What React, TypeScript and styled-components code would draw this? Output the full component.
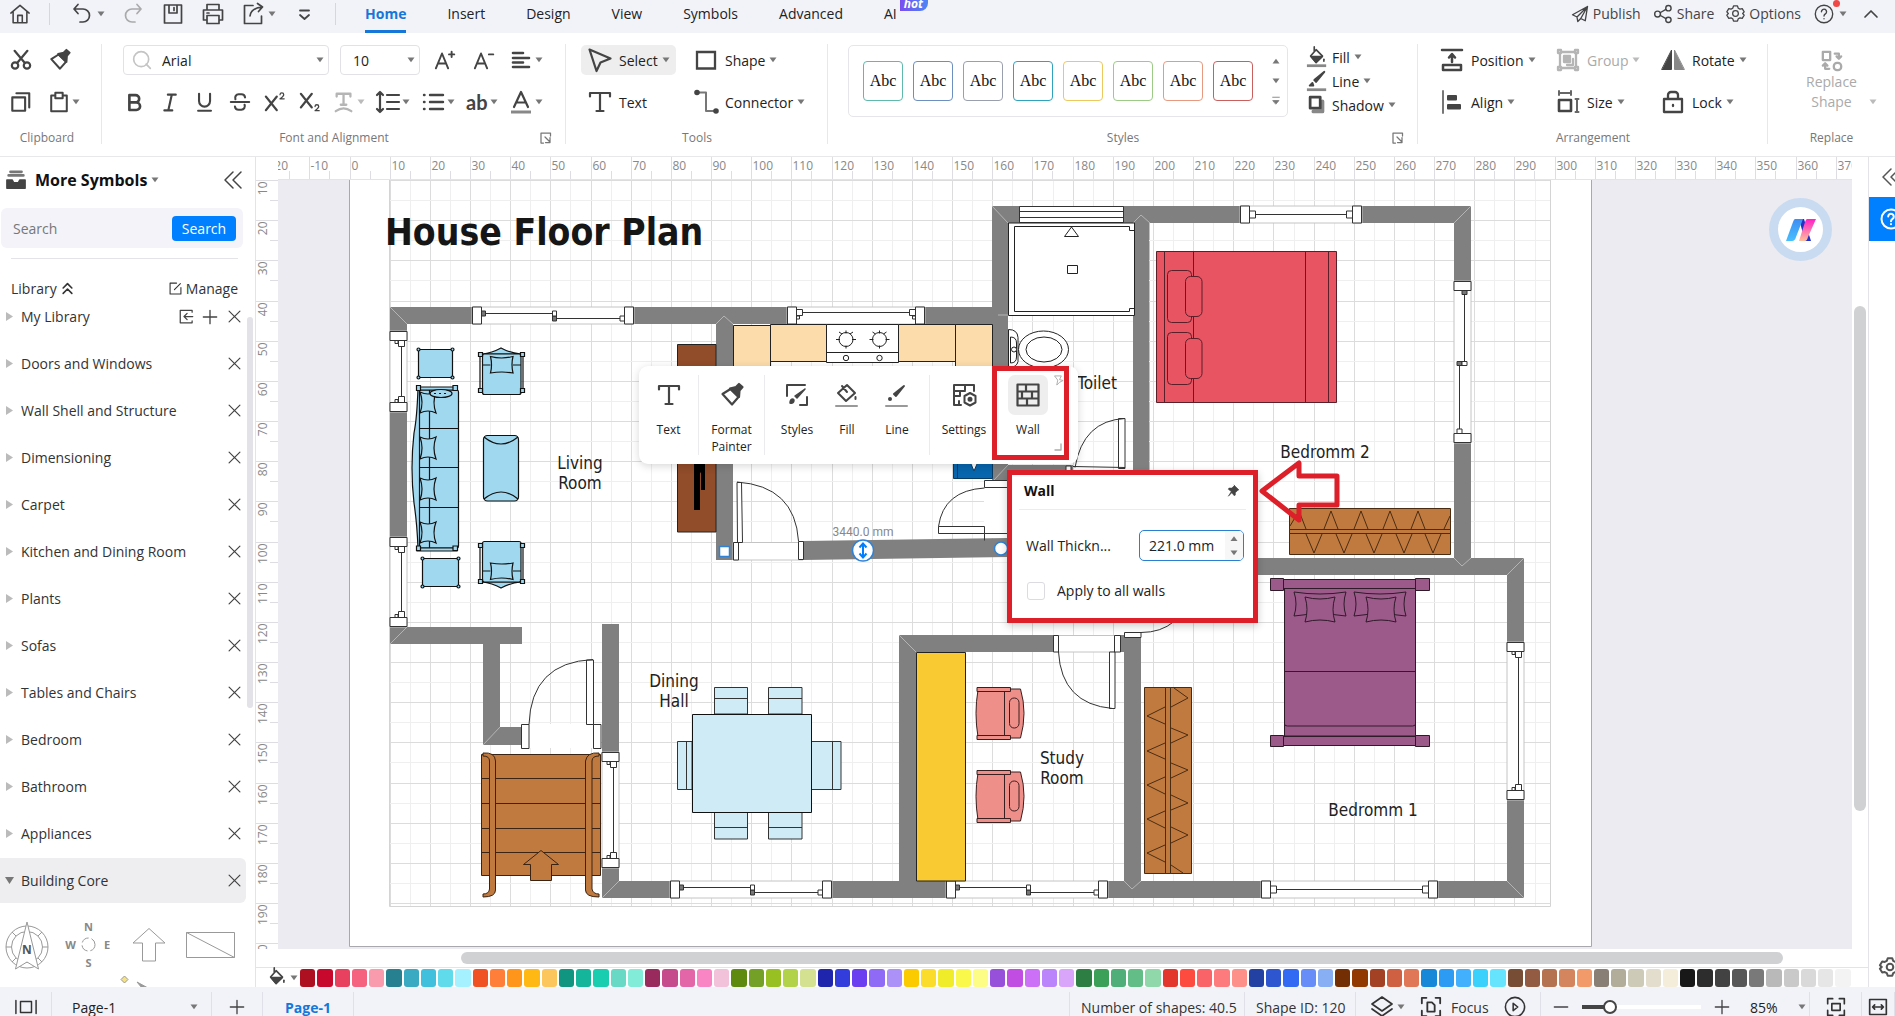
import React from "react";
import styled, { createGlobalStyle, css } from "styled-components";

const UI_FONT = `"Open Sans", "Noto Sans", sans-serif`;
const PLAN_FONT = `"DejaVu Sans Condensed", "Noto Sans", sans-serif`;
const BLUE = "#0080ff";

const GlobalStyle = createGlobalStyle`
  *, *::before, *::after { box-sizing: border-box; }
  html, body { margin: 0; height: 100%; overflow: hidden; }
  body { font-family: ${UI_FONT}; font-size: 14px; color: #222; background: #fff; }
  button, input, select { font: inherit; color: inherit; }
`;

/* ---------- shared pieces ---------- */

const Button = styled.button`
  display: flex;
  align-items: center;
  justify-content: center;
  padding: 0;
  border: 0;
  background: none;
  white-space: nowrap;
  cursor: pointer;
`;

const Svg = styled.svg<{ $size?: number }>`
  display: block;
  flex: none;
  width: ${(p) => p.$size ?? 24}px;
  height: ${(p) => p.$size ?? 24}px;
  fill: none;
  stroke: currentColor;
  stroke-width: 2;
  stroke-linecap: round;
  stroke-linejoin: round;
  overflow: visible;
`;

const CaretSvg = styled.svg<{ $light?: boolean }>`
  display: block;
  flex: none;
  width: 8px;
  height: 6px;
  fill: ${(p) => (p.$light ? "#bbb" : "#777")};
`;

const Caret = ({ light }: { light?: boolean }) => (
  <CaretSvg viewBox="0 0 8 6" $light={light}>
    <path d="M.5 .5h7L4 5.200z" />
  </CaretSvg>
);

type IconProps = { size?: number; width?: number; children: React.ReactNode };
const Icon = ({ size = 24, width = 2, children }: IconProps) => (
  <Svg viewBox="0 0 24 24" $size={size} aria-hidden="true">
    <g strokeWidth={width}>{children}</g>
  </Svg>
);

const HelpIcon = ({ size, width }: { size?: number; width?: number }) => (
  <Icon size={size} width={width}>
    <circle cx="12" cy="12" r="9.5" />
    <path d="M9.2 9.6a2.8 2.8 0 1 1 4.3 2.3c-1 .7-1.5 1.2-1.5 2.3" />
    <path d="M12 17v.3" />
  </Icon>
);

const GearIcon = ({ size, width = 1.6 }: { size?: number; width?: number }) => (
  <Icon size={size} width={width}>
    <path d="M9.5 2.5h5l1 2.8 2.2 1.2 2.8-.6L23 10l-2 2 2 2-2.500 4.100-2.800-.6-2.200 1.200-1 2.800h-5l-1-2.800-2.200-1.200-2.800.6L1 14l2-2-2-2 2.500-4.100 2.800.6 2.200-1.200z" />
    <circle cx="12" cy="12" r="3.600" />
  </Icon>
);

const DoubleLeft = () => (
  <Icon size={24} width={1.500}>
    <path d="M12 4l-8 8 8 8M20 4l-8 8 8 8" />
  </Icon>
);

/* ---------- application frame ---------- */

const Shell = styled.div`
  display: flex;
  flex-direction: column;
  height: 100vh;
  overflow: hidden;
  background: #fff;
`;

/* ---------- title bar ---------- */

const TitleBar = styled.header`
  display: flex;
  align-items: center;
  flex: none;
  height: 33px;
  padding: 0 12px 6px 9px;
  background: #f2f3f9;
  color: #333;
`;

const QuickAccess = styled.div<{ $gap: number; $pad: string }>`
  display: flex;
  align-items: center;
  gap: ${(p) => p.$gap}px;
  padding: ${(p) => p.$pad};
  height: 22px;
  border-right: 1px solid #d6d7de;
`;

const QuickButton = styled(Button)<{ $muted?: boolean }>`
  gap: 3px;
  color: ${(p) => (p.$muted ? "#aaa" : "#444")};
`;

const Tabs = styled.nav`
  display: flex;
  gap: 41px;
  padding-left: 29px;
`;

const Tab = styled.a<{ $active?: boolean }>`
  position: relative;
  color: #222;
  text-decoration: none;
  line-height: 26px;
  ${(p) =>
    p.$active &&
    css`
      color: #1677d8;
      font-weight: 700;
      &::after {
        content: "";
        position: absolute;
        left: 0;
        right: 0;
        bottom: -6px;
        height: 3px;
        background: #1677d8;
      }
    `}
`;

const HotBadge = styled.span`
  position: absolute;
  left: 100%;
  top: -4px;
  margin-left: 3px;
  padding: 0 5px 0 4px;
  border-radius: 0 0 8px 0;
  background: linear-gradient(90deg, #7a4df0, #4b86f5);
  color: #fff;
  font-size: 12px;
  font-style: italic;
  font-weight: 700;
  line-height: 14px;
`;

const TitleActions = styled.div`
  display: flex;
  align-items: center;
  gap: 12px;
  margin-left: auto;
`;

const TitleAction = styled(Button)`
  position: relative;
  gap: 4px;
  color: #444;
`;

const Dot = styled.i`
  position: absolute;
  left: 20px;
  top: -3px;
  width: 7px;
  height: 7px;
  border-radius: 50%;
  background: #f04747;
`;

/* ---------- ribbon ---------- */

const Ribbon = styled.div`
  display: flex;
  flex: none;
  height: 124px;
  border-bottom: 1px solid #e8e8ea;
`;

const Group = styled.section<{ $width?: number; $left: number; $last?: boolean }>`
  position: relative;
  display: flex;
  flex-direction: column;
  flex: ${(p) => (p.$width ? `0 0 ${p.$width}px` : "1 1 0")};
  min-width: 0;
  padding: 12px 0 0 ${(p) => p.$left}px;
  &::after {
    content: "";
    position: absolute;
    right: 0;
    top: 11px;
    bottom: 12px;
    width: ${(p) => (p.$last ? 0 : 1)}px;
    background: #e8e8ea;
  }
`;

const GroupName = styled.footer<{ $left: number }>`
  position: relative;
  margin: 11px 0 0 -${(p) => p.$left}px;
  color: #777;
  font-size: 12px;
  line-height: 20px;
  text-align: center;
  ${Group}:first-child > & {
    padding-right: 8px;
  }
`;

const Launcher = styled(Button)`
  position: absolute;
  right: 14px;
  top: 4px;
`;

const ToolRow = styled.div<{ $gap: number }>`
  display: flex;
  align-items: center;
  gap: ${(p) => p.$gap}px;
  height: 30px;
  & + & {
    margin-top: 12px;
  }
`;

const ToolGrid = styled.div<{ $columns: string; $gap: number }>`
  display: grid;
  grid-template-columns: ${(p) => p.$columns};
  grid-auto-rows: 30px;
  gap: 12px ${(p) => p.$gap}px;
`;

const IconButton = styled(Button)<{ $wide?: boolean; $muted?: boolean }>`
  gap: 2px;
  min-width: ${(p) => (p.$wide ? 28 : 24)}px;
  color: ${(p) => (p.$muted ? "#b5b5b5" : "#444")};
`;

const ToolButton = styled(Button)<{ $active?: boolean; $flat?: boolean; $muted?: boolean }>`
  justify-content: flex-start;
  gap: ${(p) => (p.$flat ? 4 : 7)}px;
  height: ${(p) => (p.$flat ? 24 : 30)}px;
  padding: 0 ${(p) => (p.$flat ? 0 : 7)}px;
  border-radius: 5px;
  background: ${(p) => (p.$active ? "#eee" : "none")};
  color: ${(p) => (p.$muted ? "#aaa" : "#222")};
  & > svg:first-child {
    color: ${(p) => (p.$muted ? "#b5b5b5" : "#444")};
  }
`;

const Labelled = styled.span`
  display: flex;
  align-items: center;
  gap: 4px;
`;

const Combo = styled.label<{ $width: number }>`
  display: flex;
  align-items: center;
  gap: 6px;
  width: ${(p) => p.$width}px;
  height: 30px;
  padding: 0 4px 0 8px;
  border: 1px solid #e2e2e6;
  border-radius: 4px;
  color: #c4c4c4;
`;

const PlainSelect = styled.select`
  flex: 1;
  min-width: 0;
  padding: 0 4px;
  border: 0;
  outline: 0;
  appearance: none;
  background: none;
  color: #222;
`;

const StyleArea = styled.div`
  display: flex;
  gap: 18px;
  height: 72px;
`;

const StyleBox = styled.div`
  display: flex;
  align-items: center;
  gap: 10px;
  height: 72px;
  padding: 0 3px 0 14px;
  border: 1px solid #e6e6ea;
  border-radius: 5px;
`;

const StyleSwatch = styled(Button)<{ $color: string }>`
  width: 40px;
  height: 40px;
  border: 1px solid ${(p) => p.$color};
  border-radius: 4px;
  color: #111;
  font-family: "Liberation Serif", serif;
  font-size: 16px;
`;

const StyleScroll = styled.div`
  display: flex;
  flex-direction: column;
  align-items: center;
  justify-content: space-between;
  width: 16px;
  height: 60px;
  margin-left: 5px;
`;

const StyleTools = styled.div`
  display: flex;
  flex-direction: column;
  align-items: flex-start;
`;

const ReplaceButton = styled(Button)`
  position: relative;
  flex-direction: column;
  height: 72px;
  color: #aaa;
  line-height: 20px;
`;

const CornerCaret = styled.span`
  position: absolute;
  right: 18px;
  bottom: 12px;
`;

const CaseLabel = styled.span`
  font-family: "Lato", sans-serif;
  font-size: 20px;
  font-weight: 700;
  line-height: 24px;
`;

/* ---------- workspace ---------- */

const Workspace = styled.div`
  display: flex;
  flex: 1;
  min-height: 0;
`;

const Sidebar = styled.aside`
  display: flex;
  flex-direction: column;
  flex: none;
  width: 256px;
  border-right: 1px solid #e4e4e8;
  overflow: hidden;
`;

const SideHeader = styled.div`
  display: flex;
  align-items: center;
  height: 46px;
  padding: 0 10px 0 5px;
  color: #444;
`;

const SideTitle = styled(Button)`
  gap: 4px;
  margin: 0 auto 0 8px;
  color: #111;
  font-size: 16px;
  font-weight: 700;
`;

const SearchBox = styled.form`
  display: flex;
  align-items: center;
  flex: none;
  height: 40px;
  margin: 5px 12px 10px 1px;
  padding: 0 7px 0 12px;
  border-radius: 6px;
  background: #f3f3f9;
`;

const SearchInput = styled.input`
  flex: 1;
  min-width: 0;
  padding: 0;
  border: 0;
  outline: 0;
  background: none;
  &::placeholder {
    color: #777;
    opacity: 1;
  }
`;

const SearchButton = styled(Button)`
  width: 64px;
  height: 25px;
  border-radius: 4px;
  background: ${BLUE};
  color: #fff;
`;

const LibraryBar = styled.div`
  display: flex;
  align-items: flex-end;
  justify-content: space-between;
  flex: none;
  height: 40px;
  margin: 0 17px 0 11px;
  border-top: 1px solid #e4e4e8;
`;

const BarButton = styled(Button)`
  gap: 4px;
  color: #333;
`;

const LibraryArea = styled.div`
  position: relative;
  flex: 1;
  min-height: 0;
  margin-top: -5px;
  overflow: hidden;
`;

const LibraryList = styled.ul`
  margin: 0;
  padding: 1px 0 0;
  list-style: none;
`;

const LibraryItem = styled.li<{ $open?: boolean }>`
  display: flex;
  align-items: center;
  height: 45px;
  margin: 0 9px 2px 0;
  padding: 0 0 0 5px;
  border-radius: 0 6px 6px 0;
  background: ${(p) => (p.$open ? "#eeeef0" : "none")};
`;

const LibraryName = styled(Button)`
  flex: 1;
  justify-content: flex-start;
  gap: 7px;
  color: #333;
`;

const SideScroll = styled.div`
  position: absolute;
  right: 2px;
  top: 24px;
  width: 6px;
  height: 391px;
  border-radius: 3px;
  background: #e2e2e8;
`;

const Thumbs = styled.svg`
  display: block;
  width: 255px;
  height: 90px;
`;

const Editor = styled.main`
  display: flex;
  flex-direction: column;
  flex: 1;
  min-width: 0;
`;

const EditorTop = styled.div`
  display: grid;
  grid-template-columns: 22px minmax(0, 1fr) 16px;
  grid-template-rows: 23px minmax(0, 1fr) 18px;
  flex: 1;
  min-height: 0;
`;

const RulerSvg = styled.svg<{ $side?: boolean }>`
  display: block;
  width: 100%;
  height: 100%;
  overflow: hidden;
  font-family: ${UI_FONT};
  font-size: 12px;
  fill: #888;
  stroke: none;
  border-bottom: ${(p) => (p.$side ? 0 : 1)}px solid #e4e4e8;
`;

const Canvas = styled.div`
  position: relative;
  overflow: hidden;
  background: #ebebf1;
`;

const Drawing = styled.svg`
  display: block;
  width: 1573px;
  height: 770px;
  font-family: ${PLAN_FONT};
`;

const VTrack = styled.div`
  grid-row: 2;
  grid-column: 3;
  padding: 126px 2px 0;
`;

const VThumb = styled.div`
  height: 505px;
  border-radius: 6px;
  background: #d0d1d3;
`;

const HTrack = styled.div`
  grid-column: 2;
  padding: 3px 69px 3px 183px;
`;

const HThumb = styled.div`
  height: 12px;
  border-radius: 6px;
  background: #d0d1d3;
`;

const Palette = styled.div`
  display: flex;
  align-items: center;
  flex: none;
  height: 20px;
  padding: 0 17px 0 10px;
  border-top: 1px solid #e4e4e8;
  color: #444;
`;

const Swatches = styled.div`
  display: flex;
  flex: 1;
  gap: 2px;
  margin-left: 2px;
`;

const Swatch = styled.button<{ $color: string }>`
  flex: 1;
  min-width: 0;
  height: 18px;
  padding: 0;
  border: 0;
  border-radius: 3px;
  background: ${(p) => p.$color};
`;

const RightDock = styled.aside`
  display: flex;
  flex-direction: column;
  flex: none;
  width: 27px;
  border-left: 1px solid #e4e4e8;
  overflow: hidden;
`;

const DockButton = styled(Button)<{ $active?: boolean }>`
  justify-content: flex-start;
  flex: none;
  height: ${(p) => (p.$active ? 44 : 40)}px;
  padding-left: 10px;
  background: ${(p) => (p.$active ? BLUE : "none")};
  color: ${(p) => (p.$active ? "#fff" : "#555")};
  &:last-child {
    margin-top: auto;
  }
`;

/* ---------- overlays on the canvas ---------- */

const FloatBar = styled.div`
  position: absolute;
  left: 361px;
  top: 186px;
  display: flex;
  width: 439px;
  height: 98px;
  padding: 9px 0;
  border-radius: 9px;
  background: #fff;
  box-shadow: 0 2px 8px rgba(0, 0, 0, 0.16);
`;

const FloatSection = styled.div<{ $pad: number }>`
  display: flex;
  padding: 0 ${(p) => p.$pad}px;
  & + & {
    border-left: 1px solid #ebebee;
  }
`;

const FloatTool = styled(Button)<{ $width: number }>`
  flex-direction: column;
  justify-content: flex-start;
  gap: 6px;
  width: ${(p) => p.$width}px;
  font-size: 12px;
  line-height: 17px;
  white-space: normal;
`;

const FloatIcon = styled.span<{ $active?: boolean }>`
  display: grid;
  place-items: center;
  width: 40px;
  height: 40px;
  border-radius: 7px;
  background: ${(p) => (p.$active ? "#eee" : "none")};
  color: #444;
`;

const FloatExtras = styled.div`
  position: absolute;
  right: 13px;
  top: 9px;
  bottom: 13px;
  display: flex;
  flex-direction: column;
  justify-content: space-between;
  color: #aaa;
`;

const RedFrame = styled.div`
  position: absolute;
  left: 714px;
  top: 186px;
  width: 77px;
  height: 94px;
  border: 5px solid #dd1f2a;
`;

const WallPanel = styled.section`
  position: absolute;
  left: 729px;
  top: 290px;
  width: 251px;
  height: 153px;
  padding: 0 7px;
  border: 5px solid #dd1f2a;
  background: #fff;
  box-shadow: 0 3px 8px rgba(0, 0, 0, 0.2);
`;

const PanelTitle = styled.div`
  display: flex;
  align-items: center;
  justify-content: space-between;
  height: 35px;
  padding: 0 6px 3px 5px;
  border-bottom: 1px solid #ececee;
  color: #444;
  & > strong {
    color: #111;
  }
`;

const PanelRow = styled.div`
  display: flex;
  align-items: center;
  justify-content: space-between;
  padding: 20px 2px 0 7px;
`;

const Spin = styled.span`
  display: flex;
  width: 105px;
  height: 31px;
  border: 1px solid #2a7fd0;
  border-radius: 5px;
  overflow: hidden;
`;

const SpinInput = styled.input`
  flex: 1;
  min-width: 0;
  padding: 0 0 0 9px;
  border: 0;
  outline: 0;
  background: none;
`;

const SpinButtons = styled.span`
  display: flex;
  flex-direction: column;
  width: 18px;
  background: #f7f7f8;
`;

const SpinButton = styled(Button)<{ $up?: boolean }>`
  flex: 1;
  transform: ${(p) => (p.$up ? "rotate(180deg)" : "none")};
`;

const CheckRow = styled.label`
  display: flex;
  align-items: center;
  gap: 12px;
  padding: 20px 0 0 8px;
`;

const Check = styled.input`
  width: 18px;
  height: 18px;
  margin: 0;
  appearance: none;
  border: 1px solid #dcdce0;
  border-radius: 3px;
  background: #fff;
`;

const ArrowMark = styled.svg`
  position: absolute;
  left: 978px;
  top: 276px;
  width: 90px;
  height: 72px;
  fill: none;
  stroke: #dd1f2a;
  stroke-width: 5;
  stroke-linejoin: round;
`;

const Assistant = styled(Button)`
  position: absolute;
  right: 20px;
  top: 18px;
  width: 63px;
  height: 63px;
  border: 9px solid #c9dbf1;
  border-radius: 50%;
  background: #fff;
`;

/* ---------- status bar ---------- */

const StatusBar = styled.footer`
  flex: none;
  height: 29px;
  overflow: hidden;
  background: #f2f3f9;
`;

const StatusInner = styled.div`
  display: flex;
  align-items: center;
  height: 40px;
  color: #333;
`;

const StatusCell = styled.div<{ $width: number; $left?: number; $gap?: number }>`
  display: flex;
  align-items: center;
  justify-content: ${(p) => (p.$left === undefined ? "center" : "flex-start")};
  gap: ${(p) => p.$gap ?? 0}px;
  width: ${(p) => p.$width}px;
  height: 30px;
  padding-left: ${(p) => p.$left ?? 0}px;
  border-right: 1px solid #dfe0e8;
  white-space: nowrap;
`;

const PageSelect = styled.label`
  display: flex;
  align-items: center;
  width: 100%;
  padding: 0 13px 0 16px;
`;

const ZoomSelect = styled.label`
  display: flex;
  align-items: center;
  width: 60px;
  margin-left: 12px;
`;

const StatusButton = styled(Button)<{ $gap: number }>`
  gap: ${(p) => p.$gap}px;
`;

const PageTab = styled.a`
  color: #1677d8;
  font-weight: 700;
  text-decoration: none;
`;

const Spacer = styled.div`
  flex: 1;
  height: 30px;
  border-right: 1px solid #dfe0e8;
`;

const ZoomSlider = styled.input`
  width: 119px;
  height: 16px;
  margin: 0 9px;
  appearance: none;
  background: linear-gradient(90deg, #444 0 26px, #fff 26px) center / 100% 4px no-repeat;
  &::-webkit-slider-thumb {
    appearance: none;
    width: 14px;
    height: 14px;
    border: 2px solid #444;
    border-radius: 50%;
    background: #fff;
  }
`;

/* ---------- data ---------- */

const libraries = [
  "My Library", "Doors and Windows", "Wall Shell and Structure", "Dimensioning", "Carpet",
  "Kitchen and Dining Room", "Plants", "Sofas", "Tables and Chairs", "Bedroom", "Bathroom",
  "Appliances", "Building Core",
];

const styleColors = ["#5fb9ac", "#6c8fc0", "#9a9fae", "#2fa3bd", "#ecc95f", "#9ccb86", "#e79a80", "#c9605e"];

const palette = `ad1020 c8082c e8415f f4627f f99bad 26808f 3aa9c2 40c0dd 60dbec a5f1ff
f15224 ff7f3a ff961b ffb814 fdc65d 109580 15b59c 19cdb0 67d9c5 82ecd9
992a5e c54b8c e366a9 f985c4 f2c1da 5f8a10 75a027 98c023 b2d24a d3e190
1f25ad 333ddb 6b3ff0 8e6af7 ac91f8 fbcb00 fbdc2b f0ec2a fbf84c fdfc84
9650d9 c24de3 cd70f8 bb84fb d8a5fb 2d7e43 3ca058 50ae78 62bd86 90d7aa
e3372d fd4b40 fa6468 fd7b7c fd9189 2341a3 2d56d0 336af3 678df9 88aff3
732e04 923901 a34125 cf6042 e07757 1788d8 2b9bf4 43b0fe 3bd1fd 66e4fd
774e35 935c42 b47250 d5855d f39a6b 8a7f75 b2ad9b cdcab7 e3ddcd f3edda
181818 2d2d2d 424242 575757 797979 b9b9b9 c9c9c9 d9d9d9 e6e6e6 f3f3f3`.split(/\s+/);

/* ---------- rulers ---------- */

const STEP = 40.17;

const TopRuler = () => (
  <RulerSvg>
    {Array.from({ length: 40 }, (_, i) => {
      const x = Math.round(71.5 + (i - 2) * STEP) + 0.5;
      return (
        <g key={i}>
          <path d={`M${x} 0v23M${x + 20} 14v9`} stroke="#dedee2" />
          <text x={x + 1} y="13">{(i - 2) * 10}</text>
        </g>
      );
    })}
  </RulerSvg>
);

const SideRuler = () => (
  <RulerSvg $side>
    {Array.from({ length: 20 }, (_, i) => {
      const y = Math.round(i * STEP) + 0.5;
      return (
        <g key={i}>
          <path d={`M0 ${y}h22M14 ${y + 20}h8`} stroke="#dedee2" />
          <text transform={`translate(11 ${y + 1}) rotate(-90)`} textAnchor="end">{(i + 1) * 10}</text>
        </g>
      );
    })}
  </RulerSvg>
);

/* ---------- floor plan ---------- */

const Grid = () => {
  const lines: React.ReactNode[] = [];
  for (let i = 0; i <= 57; i++) {
    const x = Math.round(389.700 + (i * STEP) / 2) + 0.5;
    if (x < 1550) lines.push(<path key={`x${i}`} d={`M${x} 180V906`} stroke={i % 2 ? "#efefef" : "#dcdcdc"} />);
  }
  for (let i = 0; i <= 36; i++) {
    const y = Math.round(180 + (i * STEP) / 2) + 0.5;
    lines.push(<path key={`y${i}`} d={`M389 ${y}H1551`} stroke={i % 2 ? "#efefef" : "#dcdcdc"} />);
  }
  return <g>{lines}<path d="M389.500 180V906.500H1550.500V180" stroke="#d4d4d4" fill="none" /></g>;
};

type WindowProps = { x: number; y: number; len: number; kind: "slide" | "casement" | "center"; vertical?: boolean };
const PlanWindow = ({ x, y, len, kind, vertical }: WindowProps) => (
  <g transform={vertical ? `translate(${x + 17} ${y}) rotate(90)` : `translate(${x} ${y})`} stroke="#333" fill="#fff">
    <path d={`M0 0H${len}V17H0z`} stroke="#c4c4c4" />
    {kind === "slide" && (
      <>
        <path d={`M13 6.500H${len / 2}M${len / 2} 11.500H${len - 13}`} />
        <path d={`M9 4h4.500v5H9zM${len / 2 - 0.5} 9h4v5h-4z`} fill="#777" />
        <path d={`M${len - 14} 9h5v5h-5zM${len / 2 - 0.5} 4h4v5h-4z`} />
      </>
    )}
    {kind === "casement" && (
      <>
        <path d={`M15 5.500H${len - 15}`} />
        <path d={`M9 2.500h6.500v6H9zM${len - 15.5} 2.500h6.500v6h-6.500zM9 9h3.500v3H9zM${len - 12.5} 9h3.500v3h-3.500z`} />
      </>
    )}
    {kind === "center" && (
      <>
        <path d={`M15 8.500H${len - 15}`} />
        <path d={`M9 5h6.500v7H9zM${len - 15.5} 5h6.500v7h-6.500z`} />
      </>
    )}
    <path d={`M.5 0h9v17H.5zM${len - 9.5} 0h9v17h-9z`} />
  </g>
);

const Armchair = () => (
  <g>
    <path d="M482 354q10-1 19-6 9 5 20 6z" />
    <rect x="482.500" y="354" width="38.500" height="40.500" rx="2" />
    <path d="M482.500 365h8M513 365h8M480 355v36h2.500M523 355v36h-2.500" fill="none" />
    <path d="M490.500 356.500q11 3 22.500 0-2 8 0 16.500-11-2-22.500 0 2-8 0-16.500z" />
    <path d="M478.500 352.500h4v4h-4zM520.500 352.500h4v4h-4zM478.500 388.500h4v4h-4zM520.500 388.500h4v4h-4z" />
  </g>
);

const cushion = (x: number, y: number, w: number, h: number) =>
  `M${x} ${y}q${w / 2} 4 ${w} 0q-4 ${h / 2} 0 ${h}q${-w / 2} -4 ${-w} 0q4 ${-h / 2} 0 ${-h}z`;

const StudyChair = ({ dy }: { dy: number }) => (
  <g transform={`translate(0 ${dy})`} fill="#ef8f8a" stroke="#3a1f1f">
    <path d="M978 690q-4 23 0 47h27v-47z" />
    <path d="M1004.500 689h16q7 24 0 49h-16z" />
    <path d="M977 687.500h33.500v4H977zM977 735.500h33.500v4H977z" />
    <rect x="1009.500" y="698" width="9.500" height="30" rx="4.500" />
  </g>
);

const Burner = ({ cx }: { cx: number }) => (
  <g fill="none" stroke="#222">
    <circle cx={cx} cy="339.500" r="7" />
    <path d={`M${cx} 330.500v3M${cx} 345.500v3M${cx - 10} 339.500h4M${cx + 6} 339.500h4M${cx - 4} 334l-3-2M${cx + 4} 334l3-2`} />
    <circle cx={cx} cy="358" r="2.700" />
  </g>
);

const FloorPlan = () => (
  <Drawing viewBox="278 180 1573 770" role="img" aria-label="House floor plan">
    <path d="M349.500 170H1591.500V946.500H349.500z" fill="#fff" stroke="#a9a9ad" />
    <Grid />

    <g fill="#808080">
      <path d="M390 307H992V206H1471V558H1524V898H602V624H619V881H899V635H1124V480H1133V223H1008V482H992V324H733V560H716V324H407V627H522V644H500V727L521 727V745H483V644H390z" />
      <path d="M1133 206h17v276h-17zM1008 465h65v17h-65z" />
      <path d="M803 541L1008 538V557L803 560z" />
    </g>
    <path d="M1149.500 223V558H1454V223z" fill="#fff" />
    <path d="M1141 575H1507V881H1141z" fill="#fff" />
    <path d="M916 652H1124V881H916z" fill="#fff" />
    <path d="M1124 482h126v154h-126z" fill="#fff" />
    <g>
      {Array.from({ length: 30 }, (_, i) => {
        const x = Math.round(389.7 + ((i + 26) * STEP) / 2) + 0.5;
        const c = i % 2 ? "#efefef" : "#dcdcdc";
        if (x < 916 || x > 1507) return null;
        return (
          <path key={i} stroke={c} d={`${x > 1149 && x < 1454 ? `M${x} 223V558` : ""}${x > 1141 ? `M${x} 575V881` : `M${x} 652V881`}`} />
        );
      })}
      {Array.from({ length: 35 }, (_, i) => {
        const y = Math.round(180 + ((i + 2) * STEP) / 2) + 0.5;
        const c = i % 2 ? "#efefef" : "#dcdcdc";
        return <path key={i} stroke={c} d={`${y > 223 && y < 558 ? `M1149 ${y}H1454` : ""}${y > 575 && y < 881 ? `M1141 ${y}H1507` : ""}${y > 652 && y < 881 ? `M916 ${y}H1124` : ""}`} />;
      })}
    </g>
    <g fill="#808080">
      <path d="M1124 635h17v246h-17zM1250 558h257v17h-257z" />
    </g>
    <path
      d="M390 307l17 17M390 644l17-17M992 206l16 17M1471 206l-17 17M1524 558l-17 17M1524 898l-17-17M602 898l17-17M899 635l17 17M483 745l17-18M716 324l8-8 9 8M1133 223l8-8 9 8M1124 881l8 8 9-8M1454 558l8 8 9-8M994 480l14-15M998 315h10"
      stroke="#b4b4b4" fill="none"
    />

    <PlanWindow x={472} y={307} len={162} kind="slide" />
    <PlanWindow x={670} y={881} len={162} kind="slide" />
    <PlanWindow x={946} y={881} len={162} kind="slide" />
    <PlanWindow x={1454} y={281} len={162} kind="slide" vertical />
    <PlanWindow x={787} y={307} len={138} kind="casement" />
    <PlanWindow x={390} y={331} len={81} kind="casement" vertical />
    <PlanWindow x={390} y={537} len={90} kind="casement" vertical />
    <PlanWindow x={1507} y={642} len={158} kind="casement" vertical />
    <PlanWindow x={602} y={752} len={116} kind="casement" vertical />
    <PlanWindow x={1240} y={206} len={122} kind="center" />
    <PlanWindow x={1261} y={881} len={177} kind="center" />
    <path d="M1019.500 206.500h104v16h-104zM1019.500 211.500h104M1019.500 217.500h104" fill="#fff" stroke="#333" />

    {/* shower and toilet */}
    <g fill="#fff" stroke="#222">
      <path d="M1008.500 223h126v92.500h-126z" />
      <path d="M1134 230.500h-4.500V226.500H1014.500V311.500H1129.500V308.500H1134" />
      <path d="M1071.500 227l7 9.500h-14zM1067.500 265.500h10v8h-10z" />
      <path d="M1008.500 329.500q9 0 9.500 8v24q-1 6-9.500 6z" />
      <path d="M1010.500 337q6 0 6 6v14q0 6-6 6z" />
      <circle cx="1014" cy="349.500" r="2.500" />
      <ellipse cx="1043.500" cy="349.500" rx="25" ry="18.500" />
      <ellipse cx="1044" cy="349.500" rx="18" ry="12.500" />
    </g>

    {/* kitchen */}
    <g fill="#fddcab" stroke="#222">
      <path d="M733.500 325.500h37V420h-37zM770.500 324.500h56v37h-56zM898.500 324.500h57v37h-57zM955.500 324.500h37V420h-37z" />
      <path d="M826.500 324.500h72v38h-72zM826.500 352.500h72" fill="#fff" />
    </g>
    <Burner cx={846} />
    <Burner cx={879.500} />
    <path d="M953.500 440h39v38.500h-39zM957.500 440v38.500M971 464l3 7 3-7" fill="#0766ad" stroke="#0a3b63" />

    {/* television unit */}
    <path d="M677.500 344.500h38.500V532h-38.500z" fill="#914c2a" stroke="#222" />
    <path d="M694 440h9v36l-3-4v38h-6zM701 460h4v30h-4z" fill="#000" />

    {/* living room */}
    <g fill="#a0d8ef" stroke="#111" strokeWidth="1.200">
      <path d="M418.500 349.500h34v28h-34zM422.500 558.500h36v28h-36z" />
      {[[418.500, 349.500], [452.500, 349.500], [418.500, 377.500], [452.500, 377.500], [422.500, 558.500], [458.500, 558.500], [422.500, 586.500], [458.500, 586.500]].map(([x, y]) => (
        <circle key={`${x}-${y}`} cx={x} cy={y} r="1.500" />
      ))}
      <path d="M418 388q-1 30-4 45-4 35 0 70 3 20 4 45h2V388z" />
      <path d="M419.500 390H457q1.500 0 1.500 2V546q0 2-1.500 2H419.500z" />
      <path d="M419.500 428.500h39M419.500 467.500h39M419.500 507.500h39M429.500 390v158M417 387h40v3H417zM417 548h40v3H417z" />
      <path d={cushion(420, 392, 16, 21)} />
      <path d={cushion(420, 437, 16, 22)} />
      <path d={cushion(420, 478, 16, 22)} />
      <path d={cushion(420, 522, 16, 21)} />
      <ellipse cx="441" cy="393.500" rx="11" ry="4" />
      <path d="M434 393.500h14" strokeDasharray="2 3" />
      <path d="M416.500 385.500h4v5h-4zM453 385.500h4.500v5h-4.500zM416.500 546h4v4.500h-4zM453 546h4.500v4.500h-4.500z" />
      <Armchair />
      <g transform="translate(0 936) scale(1 -1)"><Armchair /></g>
      <rect x="483.500" y="435.500" width="35" height="65.500" rx="4" />
      <path d="M484 437q17 14 34 0M484 499q17-14 34 0" fill="none" />
    </g>

    {/* dining set */}
    <g fill="#cfebf5" stroke="#333">
      <path d="M714.500 687.500h33V714h-33zM768.500 687.500h33.500V714h-33.500zM714.500 812h33v27h-33zM768.500 812h33.500v27h-33.500zM677.500 741.500H692v48h-14.500zM811.500 741.500H841v48h-29.500z" />
      <path d="M714.500 698.500h33M768.500 698.500H802M714.500 827.500h33M768.500 827.500H802M686.500 741.500v48M832.500 741.500v48" />
      <path d="M692.500 714.500h119v98h-119z" stroke="#111" />
    </g>

    {/* stairs */}
    <g fill="#c07a3f" stroke="#3b2413">
      <path d="M481.500 754.500h119v121h-119zM481.500 778.500h119M481.500 803.500h119M481.500 828.500h119M481.500 852.500h119" />
      <path d="M541 850.500l17.500 14h-7v16h-21v-16h-7z" />
      <path d="M483 753q12-1 12.500 8V890q0 7-12.500 7v-3q6 0 6.500-5V761q0-5-6.500-5zM599 753q-12-1-13.500 8V890q0 7 13.500 7v-3q-6 0-7-5V761q0-5 7-5z" />
    </g>

    {/* study */}
    <path d="M916.500 652.500h49V881h-49z" fill="#f9ca31" stroke="#222" />
    <StudyChair dy={0} />
    <StudyChair dy={83} />

    {/* bedroom furniture */}
    <g fill="#e85462" stroke="#5a1f28">
      <path d="M1156.500 251.500h180V402.500h-180zM1164.500 251.500v151M1193.500 251.500v151M1305.500 251.500v151M1328.500 251.500v151" />
      <rect x="1167.500" y="270.500" width="24" height="52" rx="4" />
      <rect x="1185.500" y="276.500" width="16.500" height="40" rx="5" />
      <rect x="1167.500" y="332.500" width="24" height="52" rx="4" />
      <rect x="1185.500" y="338.500" width="16.500" height="40" rx="5" />
    </g>
    <g fill="#c07a3f" stroke="#4a2c12">
      <path d="M1289.500 508.500h161v46h-161zM1144.500 687.500h47v186h-47z" />
      <path d="M1289.500 529.500h161v4h-161zM1165.500 687.500h5v186h-5z" />
      <path
        fill="none"
        d="M1290 526l9-15 7 18M1324 529l7-18 7 18M1354 529l7-18 7 18M1383 529l7-18 7 18M1411 529l7-18 7 18M1444 529l6-13M1306 534l8 19 8-19M1336 534l8 19 8-19M1366 534l8 19 8-19M1396 534l8 19 8-19M1425 534l8 19 8-19"
      />
      <path
        fill="none"
        d="M1174 688l14 10-17 9M1171 728l17 7-17 8M1171 763l17 7-17 8M1171 795l17 8-17 7M1171 827l17 8-17 8M1171 865l12 8M1165 707l-18 9 18 8M1165 743l-18 8 18 8M1165 777l-18 8 18 9M1165 811l-18 8 18 9M1165 845l-18 8 18 9"
      />
    </g>
    <g fill="#9c5a8a" stroke="#2f1a2a">
      <path d="M1284.500 588.500h131V736h-131zM1284.500 671.500h131M1283.500 579.500h132v9h-132zM1283.500 736.500h132v9h-132z" />
      <path d="M1284.500 724q0 2 3 2h125q3 0 3-2" fill="none" />
      <path d="M1270.500 578.500h13v12h-13zM1415.500 578.500h14v12h-14zM1270.500 735.500h13v11h-13zM1415.500 735.500h14v11h-14z" />
      <path d={cushion(1294, 592, 52, 24)} />
      <path d={cushion(1305, 597, 30, 25)} />
      <path d={cushion(1354, 592, 52, 24)} />
      <path d={cushion(1366, 597, 30, 25)} />
    </g>

    {/* doors */}
    <g fill="#fff" stroke="#333">
      <path d="M521 724h80v24h-80z" stroke="none" />
      <path d="M521.500 724.500h7.500v24h-7.500zM593.500 724.500h7.500v24h-7.500zM586.500 660h7v64.500h-7z" />
      <path d="M593 659.500q-62 3-64 65" fill="none" />
      <path d="M733 542.500h70v17.500h-70z" stroke="#c4c4c4" />
      <path d="M733.500 542.500h5v17.500h-5zM798.500 541.500h5v18h-5zM737 482.500h4.500l1 60h-5z" />
      <path d="M737 482q58 4 61.500 59" fill="none" />
      <path d="M984 480h24v58h-24z" stroke="none" />
      <path d="M984.500 480.500h24v7h-24zM938.500 526.500h46v7h-46zM984.500 533.500h24M984.500 533.500v7" />
      <path d="M938.500 526.500q5-36 46-38.500" fill="none" />
      <path d="M1118.500 418.500h6.500v50h-6.500zM1066 466h5v5h-5zM1073 466.500l52 1" />
      <path d="M1125 418.500q-42 2-50 49" fill="none" />
      <path d="M1058 635.500h57v16.500h-57z" stroke="#c4c4c4" />
      <path d="M1053.500 635.500h5V652h-5zM1114.500 635.500h6V652h-6zM1109.500 652h5.500v56.500h-5.500z" />
      <path d="M1058.500 652q3 52 54 56.500" fill="none" />
      <path d="M1124.500 632.500h16.500v5h-16.500z" />
      <path d="M1141 632.500q20 0 33-11" fill="none" />
    </g>

    {/* room names */}
    <g fill="#222" fontSize="17" textAnchor="middle">
      <text x="385" y="245" fontSize="37" fontWeight="700" textAnchor="start" fill="#161616">House Floor Plan</text>
      <text x="580" y="469">Living</text>
      <text x="580" y="489">Room</text>
      <text x="674" y="687">Dining</text>
      <text x="674" y="707">Hall</text>
      <text x="1062" y="764">Study</text>
      <text x="1062" y="784">Room</text>
      <text x="1373" y="816">Bedromm 1</text>
      <text x="1325" y="458">Bedromm 2</text>
      <text x="1117" y="389" textAnchor="end">Toilet</text>
    </g>
    <text x="863" y="536" fill="#888" fontSize="12" textAnchor="middle" fontFamily="Roboto, sans-serif">3440.0 mm</text>

    {/* selection handles */}
    <g fill="#fff" stroke="#2f82d6" strokeWidth="1.500">
      <path d="M719.500 546.500h10v10h-10z" />
      <circle cx="1001" cy="548.500" r="6.500" />
      <circle cx="863" cy="550.500" r="10.500" />
      <path d="M863 545v11M859.500 547.500l3.500-4 3.500 4M859.500 553.500l3.500 4 3.500-4" stroke={BLUE} strokeWidth="2" fill="none" />
    </g>
  </Drawing>
);

/* ---------- icons ---------- */

const PainterIcon = ({ size = 22 }: { size?: number }) => (
  <Icon size={size} width={2.200}>
    <path d="M2.500 11l8-5 8 8-6.500 7.500z" />
    <path d="M10 5.500l6-1.500L19 1l3.500 3L19.500 7.500 19 14z" fill="currentColor" />
  </Icon>
);
const TextIcon = ({ size }: { size?: number }) => (
  <Icon size={size} width={2.200}><path d="M2 6.500V3h20v3.500M12 3v18M8.500 21h7" /></Icon>
);
const BucketIcon = ({ size, bar = true }: { size?: number; bar?: boolean }) => (
  <Icon size={size} width={1.800}>
    <path d="M9 1v5M5 11l6-7 7 7-7 7z" />
    <path d="M5.500 11.500h12L11 18z" fill="currentColor" />
    <path d="M19.500 14.500v2" />
    {bar && <path d="M1 21.500h21" stroke="#888" strokeWidth="3" strokeLinecap="butt" />}
  </Icon>
);
const BrushLineIcon = ({ size }: { size?: number }) => (
  <Icon size={size}>
    <path d="M20 2l-9 11-2-2z" fill="currentColor" />
    <path d="M7 14l-3 3h4z" fill="currentColor" />
    <path d="M1 21.500h21" stroke="#888" strokeWidth="3" strokeLinecap="butt" />
  </Icon>
);
const PinIcon = () => (
  <Icon size={14}><path d="M14 2l8 8-2 1-4 4v4l-2 1-4-5-6 6 5-8-5-4 1-2h5l4-4z" fill="currentColor" strokeWidth="1" /></Icon>
);
const LauncherIcon = () => (
  <Icon size={12} width={2.500}><path d="M21 8V2H2v20h5M10 10l10 10M20 11v10H11" /></Icon>
);
const CloseIcon = () => <Icon size={13} width={2.200}><path d="M2 2l20 20M22 2L2 22" /></Icon>;
const PlusIcon = () => <Icon size={16} width={2}><path d="M12 2v20M2 12h20" /></Icon>;

/* ---------- page sections ---------- */

const Header = () => (
  <TitleBar>
    <QuickAccess $gap={0} $pad="0 18px 0 0">
      <QuickButton aria-label="Start page">
        <Icon size={22} width={1.700}><path d="M2 11L12 2.500 22 11M4.500 9.500v12h15v-12M9.500 21.500v-8h5v8" /></Icon>
      </QuickButton>
    </QuickAccess>
    <QuickAccess $gap={16} $pad="0 19px 0 20px">
      <QuickButton aria-label="Undo">
        <Icon size={24} width={1.700}><path d="M8 2.500L4 7l4 4.500M4.500 7h8.500a6.500 6.500 0 0 1 0 13H10" /></Icon><Caret />
      </QuickButton>
      <QuickButton aria-label="Redo" $muted>
        <Icon width={1.700}><path d="M16 2.500L20 7l-4 4.500M19.500 7H11a6.500 6.500 0 0 0 0 13h3" /></Icon>
      </QuickButton>
      <QuickButton aria-label="Save">
        <Icon width={1.700}><path d="M3.500 3h17v18h-17zM8 3v8h8V3M13 5.500v3" /></Icon>
      </QuickButton>
      <QuickButton aria-label="Print">
        <Icon width={1.700}><path d="M6 8V2.500h12V8M6 18H2.500V8h19v10H18M6 13.500h12v8H6zM6 11h2" /></Icon>
      </QuickButton>
      <QuickButton aria-label="Export">
        <Icon width={1.700}><path d="M12 3.500H3.500v18h17V14M9 14q1-8 12-9M16.500 1.500L21.500 5l-4 4.500" /></Icon><Caret />
      </QuickButton>
      <QuickButton aria-label="More commands">
        <Icon width={1.800}><path d="M8 8.500h9M8 13l4.500 4L17 13" /></Icon>
      </QuickButton>
    </QuickAccess>
    <Tabs>
      {["Home", "Insert", "Design", "View", "Symbols", "Advanced"].map((t, i) => (
        <Tab key={t} href="#" $active={i === 0}>{t}</Tab>
      ))}
      <Tab href="#">AI<HotBadge>hot</HotBadge></Tab>
    </Tabs>
    <TitleActions>
      <TitleAction>
        <Icon size={18} width={1.800}><path d="M22 2L2 13l6 3 1 6 4-4 6 3zM8 16L22 2 13 18" /></Icon>Publish
      </TitleAction>
      <TitleAction>
        <Icon size={20} width={1.700}>
          <circle cx="5.500" cy="12" r="3.500" /><circle cx="18.500" cy="5" r="3.200" /><circle cx="18.500" cy="19" r="3.200" />
          <path d="M8.500 10.500l7-4M8.500 13.500l7 4" />
        </Icon>Share
      </TitleAction>
      <TitleAction><GearIcon size={19} />Options</TitleAction>
      <TitleAction aria-label="Help"><HelpIcon size={22} width={1.500} /><Caret /><Dot /></TitleAction>
      <TitleAction aria-label="Collapse ribbon"><Icon width={1.700}><path d="M6 15l6-6 6 6" /></Icon></TitleAction>
    </TitleActions>
  </TitleBar>
);

const ribbonLabel = (text: string) => <Labelled>{text}<Caret /></Labelled>;

const RibbonBar = () => (
  <Ribbon>
    <Group $width={102} $left={9}>
      <ToolGrid $columns="24px auto" $gap={15}>
        <IconButton aria-label="Cut">
          <Icon size={22} width={2.400}><circle cx="5.500" cy="18" r="3.500" /><circle cx="18.500" cy="18" r="3.500" /><path d="M5 2l11 13M19 2L8 15" /></Icon>
        </IconButton>
        <ToolRow $gap={0}><IconButton aria-label="Format painter"><PainterIcon /></IconButton></ToolRow>
        <IconButton aria-label="Copy">
          <Icon size={22} width={2.300}><path d="M2.500 7h14v14.500h-14zM7 2.500h14V18" /></Icon>
        </IconButton>
        <ToolRow $gap={0}>
          <IconButton aria-label="Paste">
            <Icon size={22} width={2.200}><path d="M8 5H3.500v17h17V5H16M8 2h8v6H8z" /></Icon><Caret />
          </IconButton>
        </ToolRow>
      </ToolGrid>
      <GroupName $left={9}>Clipboard</GroupName>
    </Group>

    <Group $width={464} $left={21}>
      <ToolRow $gap={11}>
        <Combo $width={206} aria-label="Font">
          <Icon size={20}><circle cx="11" cy="11" r="9" /><path d="M17 17l5 5" /></Icon>
          <PlainSelect defaultValue="Arial"><option>Arial</option></PlainSelect><Caret />
        </Combo>
        <Combo $width={80} aria-label="Font size">
          <PlainSelect defaultValue="10"><option>10</option></PlainSelect><Caret />
        </Combo>
        <IconButton $wide aria-label="Grow font"><Icon size={21} width={2.200}><path d="M1 21L8 4l7 17M3.500 15.500h9M16 5h6M19 2v6" /></Icon></IconButton>
        <IconButton $wide aria-label="Shrink font"><Icon size={21} width={2.200}><path d="M1 21L8 4l7 17M3.500 15.500h9M17 5h5" /></Icon></IconButton>
        <IconButton aria-label="Align text">
          <Icon width={2.600}><path d="M4 5h10M4 10h16M4 14.500h10M4 19h16" /></Icon><Caret />
        </IconButton>
      </ToolRow>
      <ToolRow $gap={11}>
        <IconButton aria-label="Bold"><Icon size={21} width={3}><path d="M5 3.500h7a4.200 4.200 0 0 1 0 8.400H5zM5 12h8a4.200 4.200 0 0 1 0 8.500H5z" /></Icon></IconButton>
        <IconButton aria-label="Italic"><Icon size={21} width={2.500}><path d="M9 3h9M5 21h9M13.500 3l-4 18" /></Icon></IconButton>
        <IconButton aria-label="Underline"><Icon size={22} width={2.300}><path d="M5.500 3v8a6 6 0 0 0 12 0V3M4.500 21.500h14" /></Icon></IconButton>
        <IconButton aria-label="Strikethrough"><Icon size={22} width={2.300}><path d="M17.500 7a4 4 0 0 0-4-3.500h-3A4 4 0 0 0 7 9M2 12h20M17 15a4 4 0 0 1-3.500 5.500h-3A4 4 0 0 1 6.500 17" /></Icon></IconButton>
        <IconButton aria-label="Superscript"><Icon size={22} width={2.300}><path d="M2 6l12 15M14 6L2 21" /><path d="M17.500 4q0-2 2-2t2 2q0 1.500-4 4.500h4.500" strokeWidth="1.400" /></Icon></IconButton>
        <IconButton aria-label="Subscript"><Icon size={22} width={2.300}><path d="M2 3l12 15M14 3L2 18" /><path d="M17.500 17q0-2 2-2t2 2q0 1.500-4 4.500h4.500" strokeWidth="1.400" /></Icon></IconButton>
        <IconButton $muted aria-label="Text effects"><Icon size={22} width={2.500}><path d="M4 6V3h15v3M11.500 3v12M8.500 15h6M3 22q8.500-6 17 0" /></Icon><Caret light /></IconButton>
        <IconButton aria-label="Line spacing"><Icon width={2.200}><path d="M11 5h12M11 12h12M11 19h12M4 2v20M1 5l3-3 3 3M1 19l3 3 3-3" /></Icon><Caret /></IconButton>
        <IconButton aria-label="Bullets"><Icon width={2.400}><path d="M9 5h13M9 12h13M9 19h13M3 5h.5M3 12h.5M3 19h.5" /></Icon><Caret /></IconButton>
        <IconButton aria-label="Letter case"><CaseLabel>ab</CaseLabel><Caret /></IconButton>
        <IconButton aria-label="Font color"><Icon width={2.200}><path d="M5 17L12 2l7 15M7.500 12.500h9" /><path d="M2 22h20" stroke="#888" strokeWidth="3" strokeLinecap="butt" /></Icon><Caret /></IconButton>
      </ToolRow>
      <GroupName $left={21}>Font and Alignment<Launcher aria-label="Font settings"><LauncherIcon /></Launcher></GroupName>
    </Group>

    <Group $width={262} $left={15}>
      <ToolGrid $columns="95px auto" $gap={11}>
        <ToolButton $active><Icon width={2.200}><path d="M1.500 1.500l21 9-10 4L8.500 23z" /></Icon>{ribbonLabel("Select")}</ToolButton>
        <ToolButton><Icon width={2.300}><path d="M3 4h18v16.500H3z" strokeLinejoin="miter" /></Icon>{ribbonLabel("Shape")}</ToolButton>
        <ToolButton><TextIcon />Text</ToolButton>
        <ToolButton>
          <Icon><path d="M4 2.500h8v18.500h9" stroke="#777" /><circle cx="3" cy="2.500" r="1.800" fill="currentColor" /><circle cx="22" cy="21" r="1.800" fill="currentColor" /></Icon>
          {ribbonLabel("Connector")}
        </ToolButton>
      </ToolGrid>
      <GroupName $left={15}>Tools</GroupName>
    </Group>

    <Group $left={20}>
      <StyleArea>
        <StyleBox>
          {styleColors.map((c) => <StyleSwatch key={c} $color={c}>Abc</StyleSwatch>)}
          <StyleScroll>
            <SpinButton $up aria-label="Previous styles"><Caret /></SpinButton>
            <SpinButton aria-label="Next styles"><Caret /></SpinButton>
            <SpinButton aria-label="All styles"><Icon size={10}><path d="M4 3h16M5 11h14l-7 8z" fill="#777" stroke="#777" /></Icon></SpinButton>
          </StyleScroll>
        </StyleBox>
        <StyleTools>
          <ToolButton $flat><BucketIcon size={22} />{ribbonLabel("Fill")}</ToolButton>
          <ToolButton $flat><BrushLineIcon size={22} />{ribbonLabel("Line")}</ToolButton>
          <ToolButton $flat>
            <Icon size={22}><path d="M18 8v11H8" strokeWidth="4" stroke="#888" /><path d="M4.500 3.500h11v12h-11z" fill="#fff" strokeWidth="3" /></Icon>{ribbonLabel("Shadow")}
          </ToolButton>
        </StyleTools>
      </StyleArea>
      <GroupName $left={20}>Styles<Launcher aria-label="Style settings"><LauncherIcon /></Launcher></GroupName>
    </Group>

    <Group $width={350} $left={15}>
      <ToolGrid $columns="105px 94px auto" $gap={11}>
        <ToolButton><Icon width={2.500}><path d="M2 2h20M3 17h18v5H3zM12 14V7M9 9.500L12 6l3 3.500" /></Icon>{ribbonLabel("Position")}</ToolButton>
        <ToolButton $muted>
          <Icon width={2.300}><path d="M4 4h16v16H4z" /><path d="M8 8h6v6H8z" fill="currentColor" /><path d="M17 11v6h-6" /><path d="M2 2h3v3H2zM19 2h3v3h-3zM2 19h3v3H2zM19 19h3v3h-3z" fill="#fff" /></Icon>
          <Labelled>Group<Caret light /></Labelled>
        </ToolButton>
        <ToolButton><Icon width={1}><path d="M10.500 2.500v19H1z" fill="currentColor" /><path d="M13.500 2.500v19H23z" fill="#888" stroke="#888" /></Icon>{ribbonLabel("Rotate")}</ToolButton>
        <ToolButton><Icon><path d="M3 1v22" stroke="#777" /><path d="M8 6h8v3.500H8zM8 15h12v3.500H8z" fill="currentColor" /></Icon>{ribbonLabel("Align")}</ToolButton>
        <ToolButton><Icon><path d="M3 10h12v11H3z" strokeWidth="2.600" /><path d="M3 3h12M3 1v4M15 1v4M21 9v13M19.500 9h3M19.500 22h3" stroke="#666" /></Icon>{ribbonLabel("Size")}</ToolButton>
        <ToolButton><Icon width={2.300}><path d="M3 9h18v13H3zM7 9V5a3 3 0 0 1 3-3h4a3 3 0 0 1 3 3v4M12 15v1" /></Icon>{ribbonLabel("Lock")}</ToolButton>
      </ToolGrid>
      <GroupName $left={15}>Arrangement</GroupName>
    </Group>

    <Group $width={127} $left={0} $last>
      <ReplaceButton>
        <Icon size={22} width={2.500}><path d="M2 2h8v9H2zM15 4h4.500v5M17 7l2.500 2.500L22 7" /><rect x="14" y="14" width="8" height="8" rx="3.500" /><path d="M4.500 15v5.500H9M2 17l2.500-2.500L7 17" /></Icon>
        <span>Replace</span><span>Shape</span>
        <CornerCaret><Caret light /></CornerCaret>
      </ReplaceButton>
      <GroupName $left={0}>Replace</GroupName>
    </Group>
  </Ribbon>
);

const LibraryPanel = () => (
  <Sidebar>
    <SideHeader>
      <Icon size={22} width={1.500}>
        <path d="M6 3h12M4 7h16" strokeWidth="3" stroke="#777" />
        <path d="M2 12h6l1.500 3h5L16 12h6v9H2z" fill="currentColor" />
      </Icon>
      <SideTitle>More Symbols<Caret /></SideTitle>
      <Button aria-label="Collapse panel"><DoubleLeft /></Button>
    </SideHeader>
    <SearchBox>
      <SearchInput placeholder="Search" aria-label="Search symbols" />
      <SearchButton type="button">Search</SearchButton>
    </SearchBox>
    <LibraryBar>
      <BarButton>Library<Icon size={13} width={3}><path d="M4 11l8-8 8 8M4 21l8-8 8 8" /></Icon></BarButton>
      <BarButton><Icon size={13}><path d="M14 2H2v20h20V10M10 14L21 3" /></Icon>Manage</BarButton>
    </LibraryBar>
    <LibraryArea>
      <LibraryList>
        {libraries.map((name, i) => {
          const open = i === libraries.length - 1;
          return (
            <LibraryItem key={name} $open={open}>
              <LibraryName aria-expanded={open}>
                <Svg viewBox="0 0 9 9" $size={9}>
                  <path d={open ? "M0 1h9L4.500 8z" : "M1 0v9l7-4.500z"} fill={open ? "#777" : "#bbb"} stroke="none" />
                </Svg>
                {name}
              </LibraryName>
              {i === 0 && (
                <>
                  <IconButton aria-label="Import"><Icon size={15}><path d="M21 5V2H2v20h19v-3M22 12H8M13 7l-5 5 5 5" /></Icon></IconButton>
                  <IconButton aria-label="Add"><PlusIcon /></IconButton>
                </>
              )}
              <IconButton aria-label={`Close ${name}`}><CloseIcon /></IconButton>
            </LibraryItem>
          );
        })}
      </LibraryList>
      <Thumbs viewBox="0 904 255 90" fill="none" stroke="#999">
        <circle cx="27" cy="946" r="21" /><circle cx="27" cy="946" r="15.500" />
        <path d="M27 925v5M6 946h5M43 946h5M12 931l4 4M42 931l-4 4M12 961l4-4M42 961l-4-4" />
        <path d="M27 921L38.500 968 27 961 15.500 968z" fill="#fff" />
        <g fill="#888" stroke="none" fontSize="11" fontWeight="700" textAnchor="middle" fontFamily={UI_FONT}>
          <text x="27" y="953" fontSize="12" fill="#555">N</text>
          <text x="88.500" y="930">N</text><text x="88.500" y="966">S</text><text x="70.500" y="948">W</text><text x="107" y="948">E</text>
        </g>
        <circle cx="88.500" cy="943.500" r="6.500" strokeDasharray="8 3" />
        <path d="M149 927.500l16 14.500h-9.500v18h-13v-18H133zM186.500 931.500h48v25h-48zM186.500 931.500l48 25" />
        <path d="M124.500 975l3.500 3.500-3.500 3.500-3.500-3.500z" fill="#f7e27c" />
        <path d="M137 981l11 6h-6z" fill="#999" />
      </Thumbs>
      <SideScroll />
    </LibraryArea>
  </Sidebar>
);

const FloatingTools = () => (
  <FloatBar>
    <FloatSection $pad={3}>
      <FloatTool $width={53}><FloatIcon><TextIcon /></FloatIcon>Text</FloatTool>
    </FloatSection>
    <FloatSection $pad={6}>
      <FloatTool $width={53}><FloatIcon><PainterIcon size={24} /></FloatIcon>Format Painter</FloatTool>
    </FloatSection>
    <FloatSection $pad={7}>
      <FloatTool $width={50}>
        <FloatIcon><Icon><path d="M2 13V2h18M22 14v8h-7" /><path d="M20 6l-8 9-2-2zM8 16q-3 0-3 4 4 1 4-3z" fill="currentColor" strokeWidth="1.500" /></Icon></FloatIcon>Styles
      </FloatTool>
      <FloatTool $width={50}>
        <FloatIcon><Icon><path d="M7 3l5 6M3 10l9-8 8 8-9 8zM20.500 14v2" /><path d="M1 23h21" stroke="#999" /></Icon></FloatIcon>Fill
      </FloatTool>
      <FloatTool $width={50}>
        <FloatIcon><Icon><path d="M19 3l-8 10-2-2z" fill="currentColor" /><circle cx="5" cy="16" r="2" fill="currentColor" stroke="none" /><path d="M1 23h21" stroke="#999" /></Icon></FloatIcon>Line
      </FloatTool>
    </FloatSection>
    <FloatSection $pad={6}>
      <FloatTool $width={56}>
        <FloatIcon><Icon><path d="M22 8V2H2v20h7M2 8h11M8 8v5H2M13 2v5M7 22v-4" /><path d="M18 10l5.500 3v6.500L18 22.500 12.500 19.500V13z" fill="#fff" /><circle cx="18" cy="16.200" r="1.500" fill="currentColor" /></Icon></FloatIcon>Settings
      </FloatTool>
      <FloatTool $width={72}>
        <FloatIcon $active><Icon width={2.200}><path d="M1.500 1.500h21v21h-21zM1.500 8.500h21M1.500 15.500h21M10 1.500v7M6 8.500v7M16 8.500v7M11 15.500v7" /></Icon></FloatIcon>Wall
      </FloatTool>
    </FloatSection>
    <FloatExtras>
      <Icon size={11}><path d="M2 2h14l-4 8 8 2-8 4-6 6 2-10z" /></Icon>
      <Icon size={8} width={4}><path d="M21 3v18H3" /></Icon>
    </FloatExtras>
  </FloatBar>
);

const WallSettings = () => (
  <WallPanel>
    <PanelTitle><strong>Wall</strong><PinIcon /></PanelTitle>
    <PanelRow>
      <label htmlFor="thickness">Wall Thickn...</label>
      <Spin>
        <SpinInput id="thickness" defaultValue="221.0 mm" />
        <SpinButtons>
          <SpinButton $up aria-label="Increase"><Caret /></SpinButton>
          <SpinButton aria-label="Decrease"><Caret /></SpinButton>
        </SpinButtons>
      </Spin>
    </PanelRow>
    <CheckRow><Check type="checkbox" />Apply to all walls</CheckRow>
  </WallPanel>
);

const EditorArea = () => (
  <Editor>
    <EditorTop>
      <div />
      <TopRuler />
      <div />
      <SideRuler />
      <Canvas>
        <FloorPlan />
        <FloatingTools />
        <RedFrame />
        <WallSettings />
        <ArrowMark viewBox="1256 456 90 72">
          <path d="M1262 491L1299 463V476H1337V505H1299V520z" />
        </ArrowMark>
        <Assistant aria-label="AI assistant">
          <svg width="32" height="24" viewBox="0 0 32 24">
            <defs>
              <linearGradient id="pink" x1="0" y1="0" x2="0" y2="1"><stop offset="0" stopColor="#ff1fc8" /><stop offset="1" stopColor="#ffc09a" /></linearGradient>
              <linearGradient id="sky" x1="0" y1="0" x2="0" y2="1"><stop offset="0" stopColor="#3f8df2" /><stop offset="1" stopColor="#46c0ff" /></linearGradient>
            </defs>
            <path d="M14 1h5l7 22h-6z" fill="#2331c4" />
            <path d="M10 1h8l-7 18q-1 4-4 4H1L8 4q1-3 2-3z" fill="url(#sky)" />
            <path d="M22 1h9l-8 18q-1 4-3 4h-6L20 4q1-3 2-3z" fill="url(#pink)" />
          </svg>
        </Assistant>
      </Canvas>
      <VTrack><VThumb /></VTrack>
      <HTrack><HThumb /></HTrack>
    </EditorTop>
    <Palette>
      <IconButton aria-label="Fill color"><BucketIcon size={22} bar={false} /><Caret /></IconButton>
      <Swatches>
        {palette.map((c, i) => <Swatch key={i} $color={`#${c}`} aria-label={`Color ${c}`} />)}
      </Swatches>
    </Palette>
  </Editor>
);

const Status = () => (
  <StatusBar>
    <StatusInner>
      <StatusCell $width={52}>
        <Icon size={22} width={1.600}><path d="M1 5v14M23 5v14M6 6h12v12H6z" /></Icon>
      </StatusCell>
      <StatusCell $width={160} $left={0}>
        <PageSelect><PlainSelect aria-label="Page" defaultValue="Page-1"><option>Page-1</option></PlainSelect><Caret /></PageSelect>
      </StatusCell>
      <StatusCell $width={51}><IconButton aria-label="Add page"><PlusIcon /></IconButton></StatusCell>
      <StatusCell $width={91}><PageTab href="#">Page-1</PageTab></StatusCell>
      <Spacer />
      <StatusCell $width={175} $left={11}>Number of shapes: 40.5</StatusCell>
      <StatusCell $width={111} $left={11}>Shape ID: 120</StatusCell>
      <StatusCell $width={185} $left={14} $gap={15}>
        <StatusButton $gap={3} aria-label="Layers">
          <Icon width={1.700}><path d="M12 2l10 7-10 7L2 9zM2 14l10 7 10-7" /></Icon><Caret />
        </StatusButton>
        <StatusButton $gap={9}>
          <Icon size={22}><path d="M2 8V2h5M17 2h5v6M22 16v6h-5M7 22H2v-6M8 7h5l3 3v7H8z" /></Icon>Focus
        </StatusButton>
        <StatusButton $gap={0} aria-label="Present"><Icon size={22} width={1.700}><circle cx="12" cy="12" r="10.500" /><path d="M10 8v8l5-4z" /></Icon></StatusButton>
      </StatusCell>
      <StatusCell $width={269} $left={8}>
        <IconButton aria-label="Zoom out"><Icon size={16}><path d="M2 12h20" /></Icon></IconButton>
        <ZoomSlider type="range" min="0" max="100" defaultValue="20" aria-label="Zoom" />
        <IconButton aria-label="Zoom in"><PlusIcon /></IconButton>
        <ZoomSelect><PlainSelect aria-label="Zoom level" defaultValue="85%"><option>85%</option></PlainSelect><Caret /></ZoomSelect>
      </StatusCell>
      <StatusCell $width={52}><Icon size={20}><path d="M2 8V2h6M16 2h6v6M22 16v6h-6M8 22H2v-6M7 8h10v8H7z" /></Icon></StatusCell>
      <StatusCell $width={33}><Icon size={20}><path d="M2 3h20v18H2zM6 12h12M8 9.500L5.500 12 8 14.500M16 9.500l2.500 2.500-2.500 2.500" /></Icon></StatusCell>
    </StatusInner>
  </StatusBar>
);

export default function App() {
  return (
    <Shell>
      <GlobalStyle />
      <Header />
      <RibbonBar />
      <Workspace>
        <LibraryPanel />
        <EditorArea />
        <RightDock>
          <DockButton aria-label="Expand panel"><DoubleLeft /></DockButton>
          <DockButton $active aria-label="Help panel"><HelpIcon width={2} /></DockButton>
          <DockButton aria-label="Settings"><GearIcon size={22} width={2.200} /></DockButton>
        </RightDock>
      </Workspace>
      <Status />
    </Shell>
  );
}
